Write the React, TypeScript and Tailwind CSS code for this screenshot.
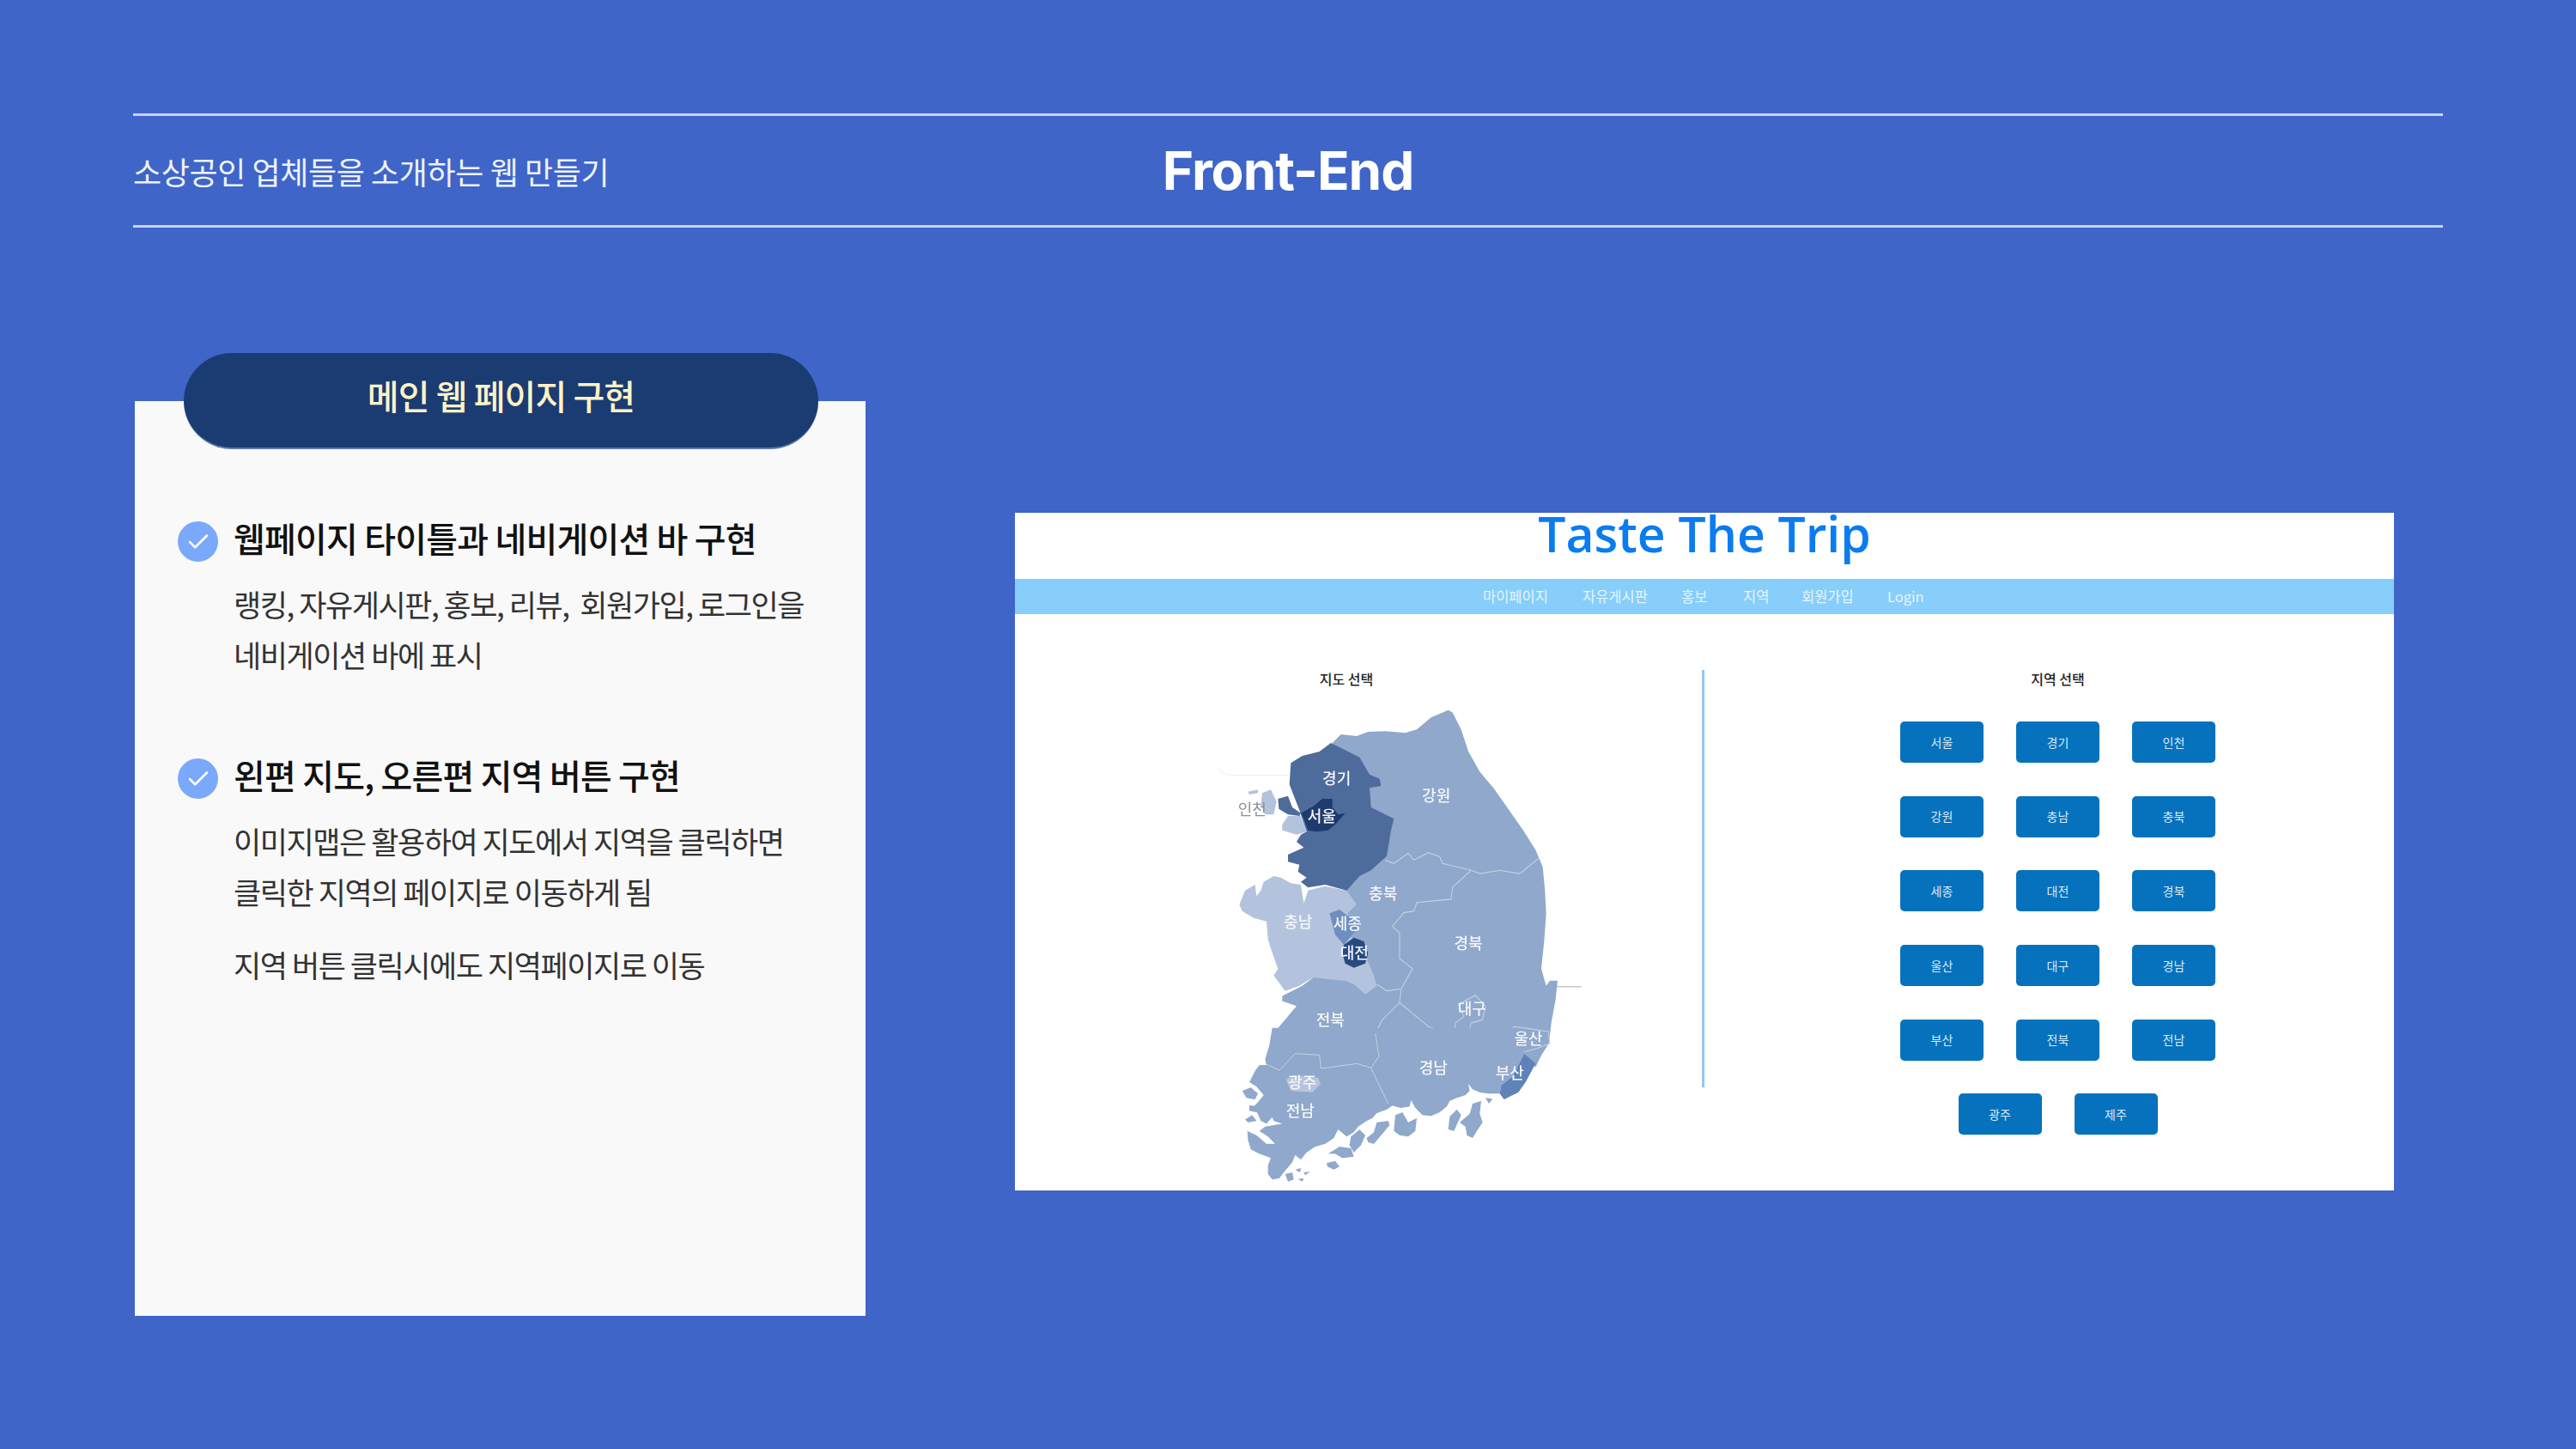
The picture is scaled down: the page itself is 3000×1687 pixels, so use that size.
import React from 'react';
import { Check } from 'lucide-react';

const kr = { fontFamily: '"Noto Sans CJK KR", "Noto Sans", sans-serif' };

const mapLabels: [string, number, number][] = [
    ['경기', 530, 322], ['강원', 878, 372], ['서울', 478, 432], ['충북', 692, 660],
    ['충남', 395, 745], ['세종', 568, 748], ['대전', 592, 835], ['경북', 990, 806],
    ['대구', 1003, 1000], ['전북', 508, 1033], ['울산', 1200, 1088], ['경남', 868, 1175],
    ['부산', 1135, 1190], ['광주', 410, 1218], ['전남', 403, 1300],
];

// traced at 3x from the south coast, origin at (1440,1210) of the page
const southCoast =
    'M1000,-40 L1005,50 L965,130 L925,160 L920,190 L880,190 L850,185 L825,175 L810,155 L815,180 L800,195 L770,205 L745,215 L735,235 L710,255 L680,268 L650,265 L625,240 L610,212 L605,235 L575,240 L545,232 L525,245 L490,258 L475,275 L455,285 L425,305 L410,325 L385,340 L355,315 L340,345 L310,365 L275,375 L245,395 L225,420 L205,405 L195,430 L165,465 L150,485 L125,490 L110,470 L110,440 L120,415 L80,400 L50,385 L40,350 L38,320 L70,335 L105,365 L135,365 L110,340 L80,320 L100,305 L160,295 L130,285 L125,272 L105,295 L85,285 L75,262 L60,235 L75,220 L95,195 L70,165 L45,150 L65,110 L80,90 L105,90 L100,70 L115,20 L125,-40 Z';

const southIslands = [
    'M20,180 L50,168 L75,190 L65,210 L35,205 Z',
    'M45,230 L75,235 L70,255 L45,250 Z',
    'M30,280 L55,265 L70,285 L40,290 Z',
    'M555,265 L580,255 L600,290 L630,275 L625,320 L600,340 L570,335 L550,320 Z',
    'M780,290 L815,260 L825,225 L855,215 L850,260 L860,290 L840,320 L825,345 L805,335 L800,305 Z',
    'M745,270 L770,245 L785,265 L760,320 L740,315 Z',
    'M455,345 L480,325 L490,290 L530,285 L535,300 L510,330 L480,365 L460,360 Z',
    'M400,340 L430,315 L450,335 L435,370 L410,395 L395,370 Z',
    'M320,400 L360,375 L400,380 L410,410 L370,415 L345,400 Z',
    'M315,432 L345,425 L360,445 L340,455 L318,445 Z',
    'M170,470 L195,465 L200,490 L180,497 Z',
    'M205,455 L225,450 L222,465 Z',
    'M235,465 L258,462 L240,475 Z',
    'M215,488 L235,485 L230,497 Z',
    'M870,205 L895,208 L882,225 Z',
];

const KoreaMap: React.FC = () => (
    <svg width={520} height={571} viewBox="0 0 520 571" className="block blur-[0.6px]">
        <g transform="translate(0,-35) scale(0.3333,0.3953)">
            <path d="M115,285 Q125,310 170,310 L360,310" fill="none" stroke="#e4e8ef" strokeWidth="2" />
            <path d="M1300,933 L1385,933" fill="none" stroke="#b5b9bf" strokeWidth="3" />
            <path
                fill="#8fa8cb"
                d="M515,215 L545,190 L600,195 L640,182 L700,180 L770,185 L810,175 L860,140 L920,118 L935,125 L965,175 L990,240 L1030,300 L1080,350 L1130,410 L1180,470 L1225,530 L1250,580 L1258,650 L1262,720 L1255,800 L1245,880 L1262,930 L1275,915 L1302,915 L1295,970 L1280,1040 L1272,1100 L1245,1135 L1225,1170 L1180,1135 L320,1100 L300,1080 L340,1040 L390,990 L340,975 L340,960 L410,930 L450,905 L560,700 Z"
            />
            <g fill="none" stroke="#c5d2e4" strokeWidth="3">
                <path d="M700,560 L730,570 L780,540 L800,560 L850,538 L890,550 L900,570 L1000,590 L1030,600 L1100,590 L1170,600 L1235,555" />
                <path d="M1000,590 L935,640 L930,675 L810,685 L800,710 L765,715 L725,755 L750,775 L750,850 L795,880 L755,940 L750,980 L850,1050 L940,1075 L980,1060 L985,1085 L1115,1075" />
                <path d="M670,925 L705,945 L750,940" />
                <path d="M750,980 L690,1030 L665,1071" />
                <path d="M940,1075 L945,1040 L975,1020 L955,985 L1015,958 L1050,990 L1040,1030 L1000,1040 L985,1085" />
                <path d="M1115,1075 L1150,1050 L1270,1065 L1275,1100 L1230,1115 L1185,1125 L1120,1090 Z" />
            </g>
        </g>
        {/* south coast */}
        <g transform="translate(60,395) scale(0.3333)">
            <path d={southCoast} fill="#8fa8cb" />
            {southIslands.map((d) => (
                <path key={d} d={d} fill="#8fa8cb" />
            ))}
            <path fill="#5f83b8" d="M1005,50 L1045,85 L1010,150 L985,185 L935,210 L920,190 L925,160 L965,130 Z" />
            <path fill="#b7c4da" d="M172,140 L205,125 L285,135 L295,155 L265,185 L190,180 Z" />
            <circle cx={675} cy={295} r={5} fill="white" />
            <circle cx={775} cy={320} r={6} fill="white" />
            <g fill="none" stroke="#c5d2e4" strokeWidth="3">
                <path d="M100,85 L150,108 L205,50 L290,55 L295,102 L420,85 L470,100 L530,225" />
                <path d="M470,100 L498,60 L485,-20" />
            </g>
        </g>
        {/* capital area and chungnam */}
        <g transform="translate(60,65) scale(0.3333)">
            <path
                fill="#b4c3dd"
                d="M10,520 L30,470 L65,450 L70,490 L85,470 L95,440 L130,420 L155,425 L190,445 L225,450 L235,515 L250,470 L310,455 L385,470 L420,518 L390,548 L395,625 L460,720 L480,767 L490,803 L450,833 L410,797 L380,785 L310,779 L270,773 L220,803 L170,821 L130,767 L145,744 L120,673 L110,640 L105,578 L60,566 L20,542 Z"
            />
            <path fill="#6d8fc0" d="M325,550 L360,537 L430,590 L405,625 L375,660 L345,625 Z" />
            <path fill="#264a80" d="M375,660 L410,635 L445,648 L460,690 L450,725 L410,740 L380,725 L370,690 Z" />
            <path
                fill="#4d6b9b"
                d="M330,-45 L430,5 L465,65 L500,80 L505,105 L465,112 L470,180 L550,220 L540,260 L525,350 L470,400 L430,420 L385,470 L310,450 L250,460 L225,440 L245,425 L215,405 L220,380 L180,370 L180,345 L235,320 L210,300 L225,275 L245,265 L220,190 L185,100 L190,25 L230,0 L290,-15 Z"
            />
            <path fill="#4d6b9b" d="M145,150 L180,140 L195,180 L225,200 L220,210 L180,205 L148,185 Z" />
            <path fill="#b4c3dd" d="M90,130 L120,118 L140,160 L130,205 L100,205 L85,170 Z" />
            <path fill="#b4c3dd" d="M40,125 L75,118 L75,130 L45,135 Z" />
            <path fill="#b4c3dd" d="M180,210 L225,210 L245,265 L210,275 L160,260 L160,240 Z" />
            <path
                fill="#1e3a6e"
                d="M225,200 L270,175 L300,150 L335,150 L335,180 L355,205 L380,200 L345,240 L320,260 L280,265 L250,260 L235,220 Z"
            />
        </g>
        {mapLabels.map(([name, x, y]) => (
            <text
                key={name}
                x={x / 3}
                y={y / 2.53 - 35 + 6}
                textAnchor="middle"
                fill="#f4f6fa"
                fontSize={18}
                fontWeight={500}
                style={kr}
            >
                {name}
            </text>
        ))}
        <text x={235 / 3} y={412 / 2.53 - 35 + 6} textAnchor="middle" fill="#8b8f96" fontSize={18} style={kr}>
            인천
        </text>
    </svg>
);

const navItems = [
    ['마이페이지', 'w-[116px]'],
    ['자유게시판', 'w-[115px]'],
    ['홍보', 'w-[72px]'],
    ['지역', 'w-[68px]'],
    ['회원가입', 'w-[100px]'],
    ['Login', 'w-[40px]'],
];

const regionRows = [
    ['서울', '경기', '인천'],
    ['강원', '충남', '충북'],
    ['세종', '대전', '경북'],
    ['울산', '대구', '경남'],
    ['부산', '전북', '전남'],
];

const RegionButton: React.FC<{ name: string }> = ({ name }) => (
    <div className="w-[97px] h-[48px] rounded-[5px] bg-[#0672bd] text-[#dbe9f5] text-[14px] flex items-center justify-center">
        {name}
    </div>
);

const CheckItem: React.FC<{ title: string; className?: string; children: React.ReactNode }> = ({ title, className, children }) => (
    <div className={className}>
        <div className="flex items-center">
            <div className="w-[47px] h-[47px] rounded-full bg-[#7aa9fb] flex items-center justify-center shrink-0">
                <Check className="w-[30px] h-[30px] text-white" strokeWidth={2} />
            </div>
            <h3 className="ml-[18px] -mt-[8px] text-[40px] leading-[47px] font-medium text-[#111] tracking-[-0.8px] whitespace-nowrap">{title}</h3>
        </div>
        <div className="ml-[65px] mt-[19px] text-[35px] leading-[59px] text-[#333] tracking-[-1.45px] whitespace-pre">{children}</div>
    </div>
);

const App: React.FC = () => {
    return (
        <div className="w-[3000px] h-[1687px] bg-[#3f65c8] px-[155px] pt-[132px] overflow-hidden" style={kr}>
            <div className="h-[133px] border-y-[3px] border-[#c5d3f2] grid grid-cols-3 items-center">
                <p className="text-[36px] text-[#eef2fc] tracking-[-0.4px] whitespace-nowrap">소상공인 업체들을 소개하는 웹 만들기</p>
                <h1 className="text-[62px] font-bold text-white text-center tracking-[-1px]" style={{ fontFamily: 'Inter, sans-serif' }}>
                    Front-End
                </h1>
            </div>

            <div className="flex items-start ml-[2px] mt-[202px]">
                <div className="w-[851px] h-[1065px] bg-[#f9f9f9] shrink-0">
                    <div className="-mt-[56px] ml-[57px] w-[739px] h-[112px] rounded-[56px] bg-[#1b3b73] border-b-2 border-[#5f7ba8] flex items-center justify-center">
                        <span className="text-[40px] font-medium text-[#fdf3c4] tracking-[-0.9px] -mt-[12px]">메인 웹 페이지 구현</span>
                    </div>
                    <CheckItem title="웹페이지 타이틀과 네비게이션 바 구현" className="ml-[50px] mt-[84px]">
                        {'랭킹, 자유게시판, 홍보, 리뷰,  회원가입, 로그인을\n네비게이션 바에 표시'}
                    </CheckItem>
                    <CheckItem title="왼편 지도, 오른편 지역 버튼 구현" className="ml-[50px] mt-[92px]">
                        {'이미지맵은 활용하여 지도에서 지역을 클릭하면\n클릭한 지역의 페이지로 이동하게 됨'}
                        <p className="mt-[26px]">지역 버튼 클릭시에도 지역페이지로 이동</p>
                    </CheckItem>
                </div>

                <div className="ml-[174px] mt-[130px] w-[1606px] h-[789px] bg-white shrink-0">
                    <div className="h-[77px] flex items-start justify-center">
                        <span className="text-[57px] leading-[48px] font-semibold text-[#0a7cf0]" style={{ fontFamily: '"Open Sans", sans-serif' }}>
                            Taste The Trip
                        </span>
                    </div>
                    <div className="h-[41px] bg-[#87cefa] flex items-center pl-[545px] text-[16.5px] text-[#e8f5fe]">
                        {navItems.map(([label, width]) => (
                            <span key={label} className={`${width} whitespace-nowrap`}>
                                {label}
                            </span>
                        ))}
                    </div>
                    <div className="flex">
                        <div className="w-[800px] pl-[198px] pt-[65px]">
                            <p className="w-[376px] h-[35px] text-center text-[16px] leading-[20px] font-medium text-[#222]">지도 선택</p>
                            <KoreaMap />
                        </div>
                        <div className="w-[3px] h-[486px] mt-[65px] bg-[#90c8f5]" />
                        <div className="pl-[228px] pt-[65px]">
                            <p className="w-[367px] h-[60px] text-center text-[16px] leading-[20px] font-medium text-[#222]">지역 선택</p>
                            <div className="w-[367px] flex flex-col gap-y-[38.7px]">
                                {regionRows.map((row) => (
                                    <div key={row[0]} className="flex justify-between">
                                        {row.map((name) => (
                                            <RegionButton key={name} name={name} />
                                        ))}
                                    </div>
                                ))}
                                <div className="flex justify-center gap-[38px]">
                                    <RegionButton name="광주" />
                                    <RegionButton name="제주" />
                                </div>
                            </div>
                        </div>
                    </div>
                </div>
            </div>
        </div>
    );
};

export default App;
